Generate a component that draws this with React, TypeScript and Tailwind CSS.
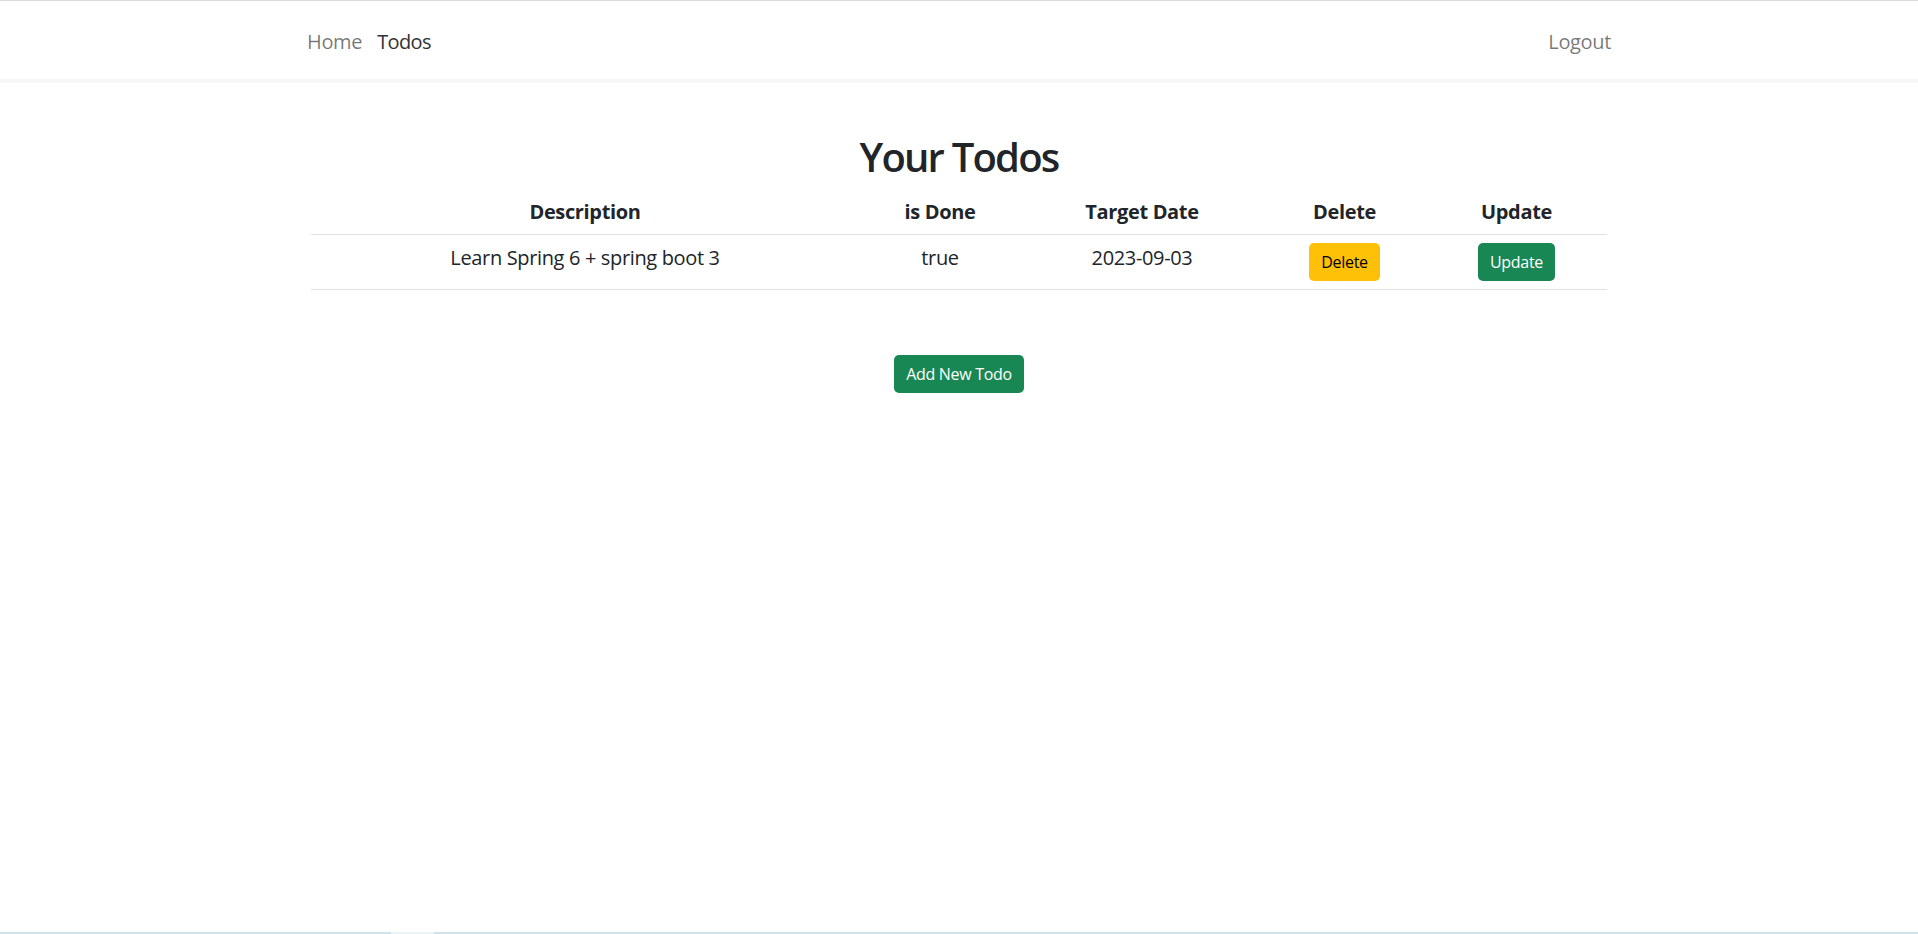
import React from 'react';

type Todo = {
  id: number;
  description: string;
  done: boolean;
  targetDate: string;
};

const todos: Todo[] = [
  { id: 1, description: 'Learn Spring 6 + spring boot 3', done: true, targetDate: '2023-09-03' },
];

const font = { fontFamily: '"Open Sans", "Noto Sans", sans-serif' };

function Header() {
  return (
    <header>
      <div className="h-px bg-[#dcdcdc]" />
      <nav className="h-[78px] bg-white">
        <div className="mx-auto flex h-full w-[1304px] items-center justify-between pt-[3px] text-[20px] leading-[30px] tracking-[-0.35px]">
          <ul className="flex items-center gap-[15px]">
            <li>
              <a href="#" className="text-[rgba(0,0,0,0.55)]">Home</a>
            </li>
            <li>
              <a href="#" className="tracking-[-0.6px] text-[#333]">Todos</a>
            </li>
          </ul>
          <a href="#" className="text-[rgba(0,0,0,0.55)]">Logout</a>
        </div>
      </nav>
      <div className="h-[4px] bg-[#f6f7f9]" />
    </header>
  );
}

function TodoTable() {
  return (
    <table className="w-[1296px] table-fixed border-collapse text-[20px] leading-[30px] tracking-[-0.35px] text-[#212529]">
      <colgroup>
        <col className="w-[548px]" />
        <col className="w-[162px]" />
        <col className="w-[242px]" />
        <col className="w-[163px]" />
        <col className="w-[181px]" />
      </colgroup>
      <thead>
        <tr className="border-b border-[#dee2e6]">
          <th className="px-[10px] pb-[7px] pt-[8px] text-center font-bold">Description</th>
          <th className="px-[10px] pb-[7px] pt-[8px] text-center font-bold">is Done</th>
          <th className="px-[10px] pb-[7px] pt-[8px] text-center font-bold">Target Date</th>
          <th className="px-[10px] pb-[7px] pt-[8px] text-center font-bold">Delete</th>
          <th className="px-[10px] pb-[7px] pt-[8px] text-center font-bold">Update</th>
        </tr>
      </thead>
      <tbody>
        {todos.map((todo) => (
          <tr key={todo.id} className="border-b border-[#dee2e6] align-top">
            <td className="px-[10px] py-[8px] text-center">{todo.description}</td>
            <td className="px-[10px] py-[8px] text-center">{todo.done.toString()}</td>
            <td className="px-[10px] py-[8px] text-center">{todo.targetDate}</td>
            <td className="px-[10px] py-[8px] text-center">
              <button className="h-[38px] rounded-[5px] bg-[#ffc107] px-[12px] text-[16px] leading-[24px] tracking-[-0.3px] text-black">
                Delete
              </button>
            </td>
            <td className="px-[10px] py-[8px] text-center">
              <button className="h-[38px] rounded-[5px] bg-[#198754] px-[12px] text-[16px] leading-[24px] tracking-[-0.3px] text-white">
                Update
              </button>
            </td>
          </tr>
        ))}
      </tbody>
    </table>
  );
}

export default function App() {
  return (
    <div className="relative h-[934px] overflow-hidden bg-white" style={font}>
      <Header />
      <main className="flex flex-col items-center pt-[50px]">
        <h1 className="mb-[8px] text-[40px] font-semibold leading-[48px] tracking-[-1.8px] text-[#212529]">
          Your Todos
        </h1>
        <TodoTable />
        <button className="mt-[65px] h-[38px] rounded-[5px] bg-[#198754] px-[12px] text-[16px] leading-[24px] tracking-[-0.3px] text-white">
          Add New Todo
        </button>
      </main>
      <div className="absolute bottom-0 left-0 flex h-[2px] w-full bg-[#cfe3ea]">
        <div className="ml-[391px] h-full w-[43px] bg-[#eaf3f6]" />
      </div>
    </div>
  );
}
